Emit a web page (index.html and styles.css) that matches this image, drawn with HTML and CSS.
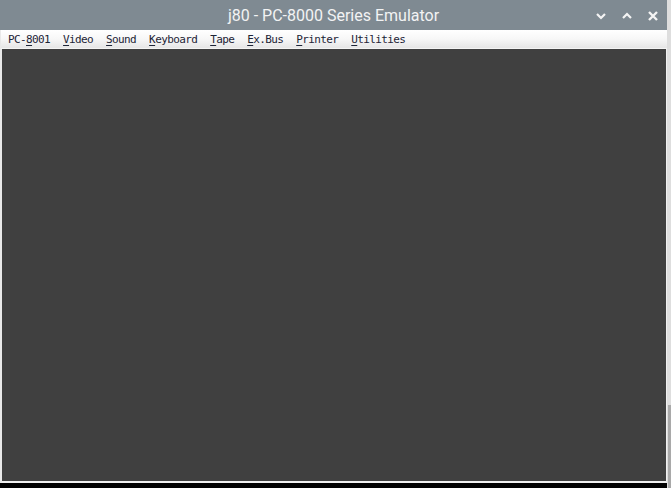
FILE: index.html
```html
<!DOCTYPE html>
<html>
<head>
<meta charset="utf-8">
<link rel="stylesheet" href="styles.css">
</head>
<body>
<div class="screen">
  <div class="window">
    <div class="titlebar">
      <div class="title">j80 - PC-8000 Series Emulator</div>
      <div class="controls">
        <svg class="ctl" width="12" height="10" viewBox="0 0 12 10"><path d="M2 3 L6 7 L10 3" fill="none" stroke="#f4f4f4" stroke-width="2.2"/></svg>
        <svg class="ctl" width="12" height="10" viewBox="0 0 12 10"><path d="M2 7 L6 3 L10 7" fill="none" stroke="#f4f4f4" stroke-width="2.2"/></svg>
        <svg class="ctl" width="12" height="12" viewBox="0 0 12 12"><path d="M2 2 L10 10 M10 2 L2 10" fill="none" stroke="#f4f4f4" stroke-width="2.4"/></svg>
      </div>
    </div>
    <div class="menubar">
      <span class="item">PC-<u>8</u>001</span>
      <span class="item"><u>V</u>ideo</span>
      <span class="item"><u>S</u>ound</span>
      <span class="item"><u>K</u>eyboard</span>
      <span class="item"><u>T</u>ape</span>
      <span class="item"><u>E</u>x.Bus</span>
      <span class="item"><u>P</u>rinter</span>
      <span class="item"><u>U</u>tilities</span>
    </div>
    <div class="content"></div>
  </div>
  <div class="side">
    <div class="side-top"></div>
    <div class="side-thumb"></div>
  </div>
</div>
</body>
</html>
```
FILE: styles.css
```css
html, body {
  margin: 0;
  padding: 0;
  background: #000;
}
.screen {
  display: flex;
  width: 671px;
  height: 488px;
}
.window {
  width: 667px;
  height: 483px;
  display: flex;
  flex-direction: column;
  background: #e9e9e9;
}
.titlebar {
  height: 30px;
  background: #7f8a92;
  position: relative;
  display: flex;
  align-items: center;
  justify-content: center;
}
.title {
  font-family: Roboto, "Liberation Sans", sans-serif;
  font-size: 16px;
  color: #f2f3f4;
  padding-top: 1px;
}
.controls {
  position: absolute;
  right: 8px;
  top: 10px;
  display: flex;
  gap: 14px;
  align-items: center;
}
.ctl {
  display: block;
}
.menubar {
  height: 18px;
  display: flex;
  align-items: center;
  padding-left: 7px;
  gap: 13px;
  background: linear-gradient(#ffffff 0%, #f7f7f7 50%, #e6e6e6 100%);
  border-bottom: 1px solid #f4f4f4;
  margin-left: 1px;
}
.item {
  font-family: "DejaVu Sans Mono", monospace;
  font-size: 11px;
  letter-spacing: -0.62px;
  color: #1d2436;
  line-height: 18px;
  white-space: pre;
  padding-top: 1px;
}
.item u {
  text-decoration-thickness: 1px;
  text-underline-offset: 2px;
}
.content {
  flex: 1;
  background: #404040;
  margin-left: 2px;
  border-right: 1px solid #f0f0f0;
  border-bottom: 2px solid #efefef;
}
.side {
  width: 4px;
  display: flex;
  flex-direction: column;
  background: #dcdcdc;
}
.side-top {
  height: 405px;
  background: #dedede;
}
.side-thumb {
  flex: 1;
  background: #a9a9a9;
  margin-left: 1px;
}
```
